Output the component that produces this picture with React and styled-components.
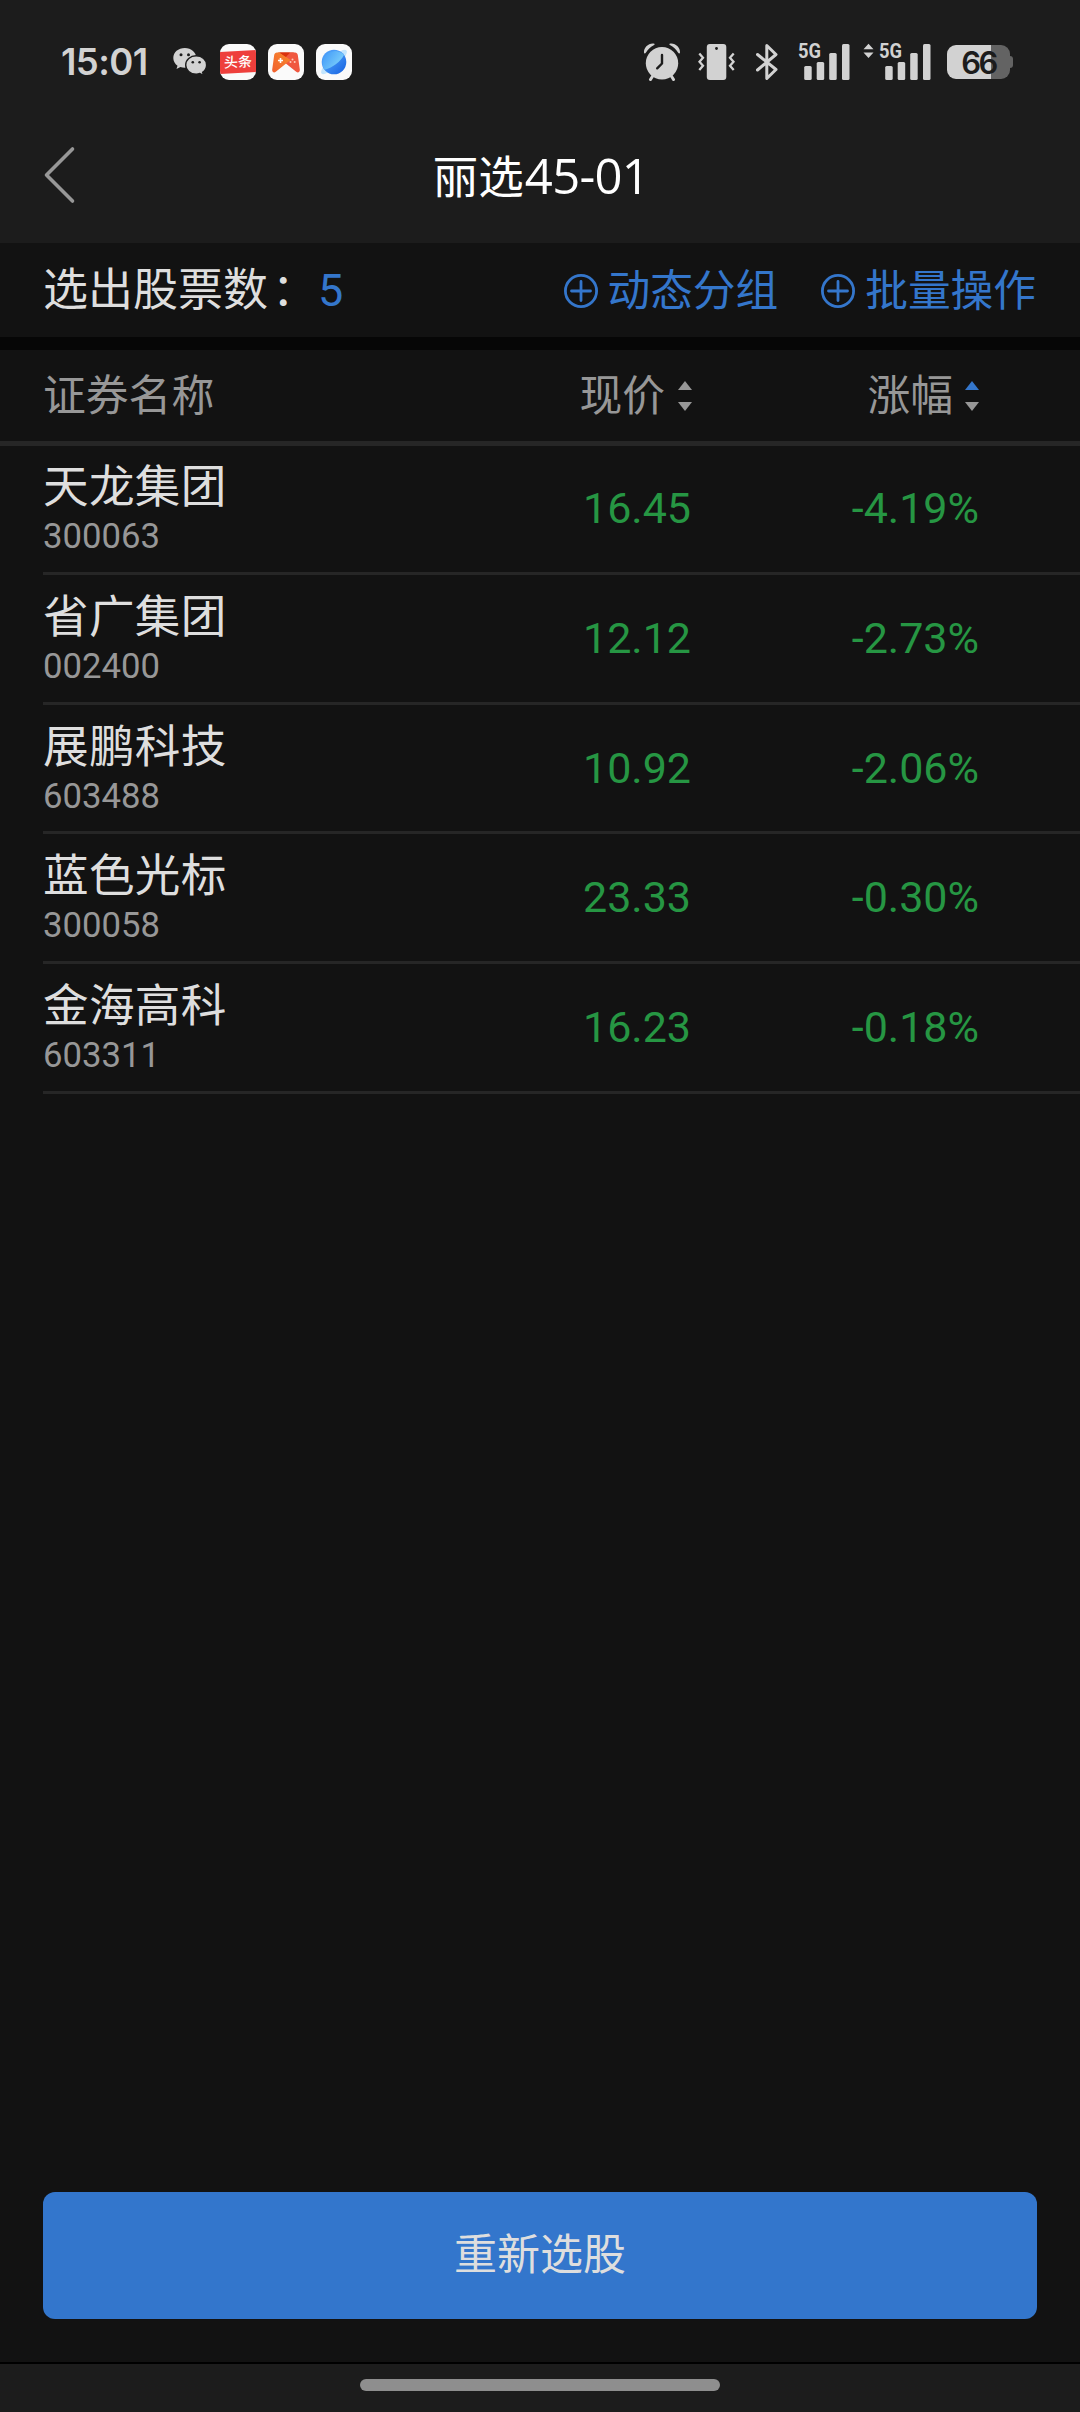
import React from 'react';
import styled, { createGlobalStyle } from 'styled-components';

const color = {
  page: '#121212',
  bar: '#1c1c1c',
  gap: '#060606',
  line: '#262626',
  text: '#dedede',
  muted: '#979797',
  blue: '#3476cb',
  button: '#3376cc',
  green: '#269643',
  status: '#d2d2d2',
};

const GlobalStyle = createGlobalStyle`
  * { box-sizing: border-box; }
  body {
    margin: 0;
    background: ${color.page};
    font-family: Roboto, 'Noto Sans CJK SC', sans-serif;
  }
  button { font: inherit; border: 0; padding: 0; background: none; }
  svg { display: block; flex: none; }
`;

const Screen = styled.div`
  display: flex;
  flex-direction: column;
  width: 1080px;
  height: 2412px;
  overflow: hidden;
  background: ${color.page};
  color: ${color.text};
`;

const StatusBar = styled.div`
  display: flex;
  align-items: center;
  justify-content: space-between;
  height: 124px;
  padding: 0 67px 0 61px;
  background: ${color.bar};
  color: ${color.status};
`;

const Clock = styled.span`
  width: 112px;
  font: 600 36.5px/40px Inter, sans-serif;
  letter-spacing: -0.6px;
  white-space: nowrap;
`;

const StatusGroup = styled.div`
  display: flex;
  align-items: center;
  gap: ${(p) => p.$gap || 0}px;
`;

const StatusIcon = styled.span`
  margin-right: ${(p) => p.$after}px;
`;

const AppTile = styled.span`
  display: flex;
  align-items: center;
  justify-content: center;
  width: 36px;
  height: 36px;
  border-radius: 9px;
  background: #fafafa;
  overflow: hidden;
`;

const NewsLabel = styled.span`
  width: 36px;
  height: 22px;
  background: #ee3f3c;
  color: #fff;
  font: 500 14px/21px 'Noto Sans CJK SC', sans-serif;
  text-align: center;
  transform: skewY(-3deg);
`;

const Battery = styled.span`
  display: flex;
  align-items: center;
`;

const BatteryBody = styled.span`
  width: 63px;
  height: 34px;
  border-radius: 9px;
  background: linear-gradient(90deg, ${color.status} 44px, #636363 44px);
  color: #1c1c1c;
  font: 600 31px/35px Inter, sans-serif;
  letter-spacing: -2.5px;
  text-align: center;
`;

const BatteryTip = styled.span`
  width: 3px;
  height: 12px;
  border-radius: 0 3px 3px 0;
  background: #636363;
`;

const TitleBar = styled.header`
  display: grid;
  grid-template-columns: 200px 1fr 200px;
  align-items: start;
  height: 119px;
  padding: 22px 41px 0 43px;
  background: ${color.bar};
`;

const Title = styled.h1`
  margin: 3px 0 0;
  color: #fff;
  font-size: 45.5px;
  font-weight: 400;
  line-height: 60px;
  text-align: center;
`;

const TitleCode = styled.span`
  margin-left: 1px;
  font-family: 'Open Sans', sans-serif;
  font-size: 49px;
  line-height: 1;
  letter-spacing: -0.7px;
`;

const Summary = styled.section`
  display: flex;
  align-items: center;
  height: 94px;
  padding: 2px 44px 0 43px;
  font-size: 45px;
  line-height: 60px;
  white-space: nowrap;
`;

const Colon = styled.span`
  margin-left: 4px;
`;

const Count = styled.span`
  flex: 1;
  margin-left: 1px;
  color: ${color.blue};
`;

const Action = styled.button`
  display: flex;
  align-items: center;
  gap: 10px;
  margin-left: ${(p) => p.$lead || 0}px;
  color: ${color.blue};
  font-size: 42.7px;
  line-height: 60px;
`;

const Divider = styled.div`
  height: 13px;
  background: ${color.gap};
`;

const columns = 'grid-template-columns: 1fr 260px 287px;';

const TableHead = styled.div`
  display: grid;
  ${columns}
  align-items: center;
  height: 96px;
  padding: 0 101px 0 43px;
  border-bottom: 5px solid ${color.line};
  color: ${color.muted};
  font-size: 42.8px;
  line-height: 60px;
`;

const HeadCell = styled.div`
  display: flex;
  align-items: center;
  justify-content: ${(p) => (p.$end ? 'flex-end' : 'flex-start')};
  gap: ${(p) => p.$gap || 13}px;
`;

const Row = styled.div`
  display: grid;
  ${columns}
  align-items: center;
  height: ${(p) => p.$height}px;
  margin-left: 43px;
  padding-right: 101px;
  border-bottom: 3px solid ${color.line};

  &:first-child {
    padding-bottom: 2px;
  }
`;

const Stock = styled.div`
  display: flex;
  flex-direction: column;
`;

const StockName = styled.span`
  font-size: 45.6px;
  line-height: 56px;
  letter-spacing: 0.3px;
`;

const StockCode = styled.span`
  color: ${color.muted};
  font-size: 34.7px;
  line-height: 41px;
`;

const Quote = styled.span`
  padding: 0 ${(p) => p.$inset || 0}px 1px 0;
  color: ${color.green};
  font-size: 43px;
  line-height: 50px;
  text-align: right;
`;

const Footer = styled.footer`
  display: flex;
  flex-direction: column;
  margin-top: auto;
`;

const PrimaryButton = styled.button`
  height: 127px;
  margin: 0 43px 43px;
  border-radius: 12px;
  background: ${color.button};
  color: ${color.text};
  font-size: 43px;
  line-height: 127px;
`;

const NavBar = styled.div`
  display: flex;
  justify-content: center;
  height: 50px;
  padding-top: 15px;
  border-top: 2px solid #000;
  background: ${color.bar};
`;

const HomeHandle = styled.span`
  width: 360px;
  height: 12px;
  border-radius: 6px;
  background: #8e8e8e;
`;

const WeChat = () => (
  <svg width="35" height="30" viewBox="0 0 35 30">
    <path fill="#d2d2d2" d="M11.8 1C5.300 1 0.300 5.300 0.300 11c0 3.200 1.600 5.900 4.200 7.700l-1 3.400 3.900-2c1.400.4 2.800.7 4.400.7C18.300 20.800 23.300 16.500 23.300 11S18.300 1 11.800 1z" />
    <path fill="#d2d2d2" stroke="#1c1c1c" strokeWidth="1.400" d="M23.200 8.800c-6 0-10.500 4-10.500 9.100s4.500 9.200 10.500 9.200c1.300 0 2.500-.2 3.700-.6l3.700 2-1-3.200c2.400-1.700 4-4.300 4-7.400 0-5.100-4.500-9.100-10.400-9.100z" />
    <g fill="#1c1c1c">
      <circle cx="8" cy="7.800" r="1.500" /><circle cx="15.500" cy="7.800" r="1.500" />
      <circle cx="19.800" cy="15.300" r="1.300" /><circle cx="26.600" cy="15.300" r="1.300" />
    </g>
  </svg>
);

const GameIcon = () => (
  <svg width="28" height="21" viewBox="0 0 28 21">
    <defs>
      <linearGradient id="padLeft" x1="0" y1="1" x2="1" y2="0">
        <stop offset="0" stopColor="#f0602f" /><stop offset="1" stopColor="#f98a2c" />
      </linearGradient>
    </defs>
    <path d="M6 .5h16L14 9z" fill="#d9320f" />
    <path d="M23 .5c1.500 0 2.500 1 2.800 2.500l2 14.500c.3 2.500-1.800 3.800-3.600 2.200L9.500 8 18 .5z" fill="#f0573f" />
    <path d="M5 .5C3.500.5 2.500 1.500 2.200 3l-2 14.500c-.3 2.500 1.800 3.800 3.600 2.200L18.500 8 7.500.5z" fill="url(#padLeft)" />
    <path d="M7.500.5h10.500L14 5z" fill="#d9320f" />
    <path d="M8.500 6v5M6 8.500h5" stroke="#fff" strokeWidth="1.600" />
    <g fill="#ffc9b8"><circle cx="20.500" cy="7.500" r="1" /><circle cx="18.500" cy="10" r="1" /><circle cx="22.700" cy="10" r="1" /></g>
  </svg>
);

const BrowserIcon = () => (
  <svg width="28" height="28" viewBox="0 0 28 28">
    <defs>
      <linearGradient id="planet" x1="0" y1="0" x2="1" y2="1">
        <stop offset="0.300" stopColor="#4a9cf8" /><stop offset="1" stopColor="#1560e0" />
      </linearGradient>
      <linearGradient id="planetTop" x1="0" y1="0" x2="1" y2="0.600">
        <stop offset="0" stopColor="#3e97f8" /><stop offset="1" stopColor="#7fd2fb" />
      </linearGradient>
    </defs>
    <ellipse cx="14" cy="14" rx="17" ry="5" transform="rotate(-43 14 14)" fill="#c3e5fd" />
    <circle cx="14" cy="14" r="12.300" fill="url(#planet)" />
    <path d="M4.500 21.800A12.300 12.300 0 0 1 24 7C20.500 13.500 13 19.500 4.500 21.800z" fill="url(#planetTop)" />
  </svg>
);

const Alarm = () => (
  <svg width="38" height="38" viewBox="0 0 38 38">
    <g fill="#d2d2d2">
      <path d="M1 9.800C.5 4.500 5.500 0 10.500.5c1.500.2 1.500 1 .6 1.600C7.500 4 5 6.300 3 9.600c-.7 1.100-1.800 1.200-2 .2z" />
      <path d="M37 9.800C37.500 4.500 32.500 0 27.500.5c-1.500.2-1.500 1-.6 1.600C30.500 4 33 6.300 35 9.600c.7 1.100 1.800 1.200 2 .2z" />
      <circle cx="19" cy="20.300" r="16.200" />
    </g>
    <path d="M10 32.500l-2.500 4M28 32.500l2.500 4" stroke="#d2d2d2" strokeWidth="3" strokeLinecap="round" />
    <path d="M19 12v8.500l-4.800 4.800" fill="none" stroke="#1c1c1c" strokeWidth="2.400" strokeLinecap="round" strokeLinejoin="round" />
  </svg>
);

const Vibrate = () => (
  <svg width="38" height="38" viewBox="0 0 38 38">
    <rect x="8.800" y="1" width="19.500" height="36" rx="3" fill="#d2d2d2" />
    <circle cx="18.500" cy="5.500" r="1.400" fill="#1c1c1c" />
    <path d="M1.300 10.500l3.700 4.300-3.500 4 3.500 4-3.700 4.300M35.700 10.500l-3.700 4.300 3.500 4-3.500 4 3.700 4.300" fill="none" stroke="#d2d2d2" strokeWidth="2.300" />
  </svg>
);

const Bluetooth = () => (
  <svg width="22" height="38" viewBox="0 0 22 38">
    <path d="M1.500 11.500L20 26.500 10.800 35.500V2.500L20 11.500 1.500 27" fill="none" stroke="#d2d2d2" strokeWidth="3" strokeLinejoin="round" strokeLinecap="round" />
  </svg>
);

const Signal = ({ arrows }) => (
  <svg width={arrows ? 69 : 53} height="54" viewBox={arrows ? '-16 -8 69 54' : '0 -8 53 54'} fill="#d2d2d2">
    {arrows && <path d="M-10.500 .8l5 5.500h-10zM-10.500 15l5-5.500h-10z" />}
    <text x="0" y="15" fontFamily="Roboto, sans-serif" fontSize="20" fontWeight="700" textLength="23" lengthAdjust="spacingAndGlyphs">5G</text>
    <rect x="6.200" y="23" width="7.500" height="14" rx="1.500" />
    <rect x="18.700" y="19" width="7.500" height="18" rx="1.500" />
    <rect x="31.200" y="10" width="7.500" height="27" rx="1.500" />
    <rect x="44" y="1" width="7.500" height="36" rx="1.500" />
  </svg>
);

const BackChevron = () => (
  <svg width="34" height="58" viewBox="0 0 34 58">
    <path d="M29.500 3L3.500 29l26 26" fill="none" stroke="#979797" strokeWidth="3.600" strokeLinecap="round" strokeLinejoin="round" />
  </svg>
);

const PlusCircle = () => (
  <svg width="34" height="34" viewBox="0 0 34 34" fill="none" stroke="#3476cb" strokeWidth="2.800">
    <circle cx="17" cy="17" r="15.600" />
    <path d="M17 7.500v19M7.500 17h19" strokeLinecap="round" />
  </svg>
);

const SortArrows = ({ ascending }) => (
  <svg width="14" height="30" viewBox="0 0 14 30">
    <path d="M7 0l7 9H0z" fill={ascending ? color.blue : color.muted} />
    <path d="M7 30l7-9H0z" fill={color.muted} />
  </svg>
);

const stocks = [
  { name: '天龙集团', code: '300063', price: '16.45', change: '-4.19%', height: 129 },
  { name: '省广集团', code: '002400', price: '12.12', change: '-2.73%', height: 130 },
  { name: '展鹏科技', code: '603488', price: '10.92', change: '-2.06%', height: 129 },
  { name: '蓝色光标', code: '300058', price: '23.33', change: '-0.30%', height: 130 },
  { name: '金海高科', code: '603311', price: '16.23', change: '-0.18%', height: 130 },
];

export default function App() {
  return (
    <Screen>
      <GlobalStyle />
      <StatusBar>
        <StatusGroup>
          <Clock>15:01</Clock>
          <StatusGroup $gap={12}>
            <WeChat />
            <AppTile><NewsLabel>头条</NewsLabel></AppTile>
            <AppTile><GameIcon /></AppTile>
            <AppTile><BrowserIcon /></AppTile>
          </StatusGroup>
        </StatusGroup>
        <StatusGroup>
          <StatusIcon $after={17}><Alarm /></StatusIcon>
          <StatusIcon $after={20}><Vibrate /></StatusIcon>
          <StatusIcon $after={20}><Bluetooth /></StatusIcon>
          <StatusIcon $after={12}><Signal /></StatusIcon>
          <StatusIcon $after={15}><Signal arrows /></StatusIcon>
          <Battery>
            <BatteryBody>66</BatteryBody>
            <BatteryTip />
          </Battery>
        </StatusGroup>
      </StatusBar>
      <TitleBar>
        <BackChevron />
        <Title>丽选<TitleCode>45-01</TitleCode></Title>
      </TitleBar>
      <Summary>
        <span>选出股票数<Colon>：</Colon></span>
        <Count>5</Count>
        <Action><PlusCircle />动态分组</Action>
        <Action $lead={43}><PlusCircle />批量操作</Action>
      </Summary>
      <Divider />
      <TableHead>
        <HeadCell>证券名称</HeadCell>
        <HeadCell $end>现价<SortArrows /></HeadCell>
        <HeadCell $end $gap={12}>涨幅<SortArrows ascending /></HeadCell>
      </TableHead>
      <section>
        {stocks.map((s) => (
          <Row key={s.code} $height={s.height}>
            <Stock>
              <StockName>{s.name}</StockName>
              <StockCode>{s.code}</StockCode>
            </Stock>
            <Quote $inset={1}>{s.price}</Quote>
            <Quote>{s.change}</Quote>
          </Row>
        ))}
      </section>
      <Footer>
        <PrimaryButton>重新选股</PrimaryButton>
        <NavBar><HomeHandle /></NavBar>
      </Footer>
    </Screen>
  );
}
